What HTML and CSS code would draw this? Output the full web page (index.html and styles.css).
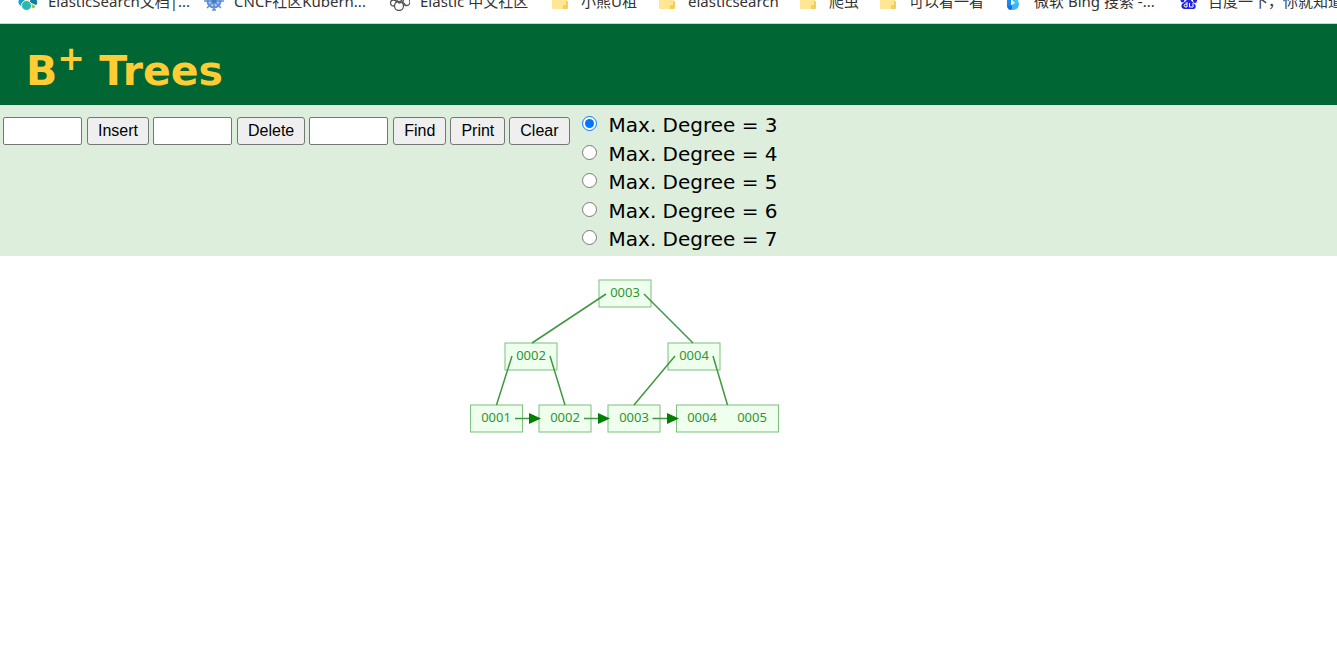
FILE: index.html
```html
<!DOCTYPE html>
<html lang="en">
<head>
<meta charset="utf-8">
<title>B+ Trees</title>
<link rel="stylesheet" href="styles.css">
</head>
<body>
<nav class="bookmarks" aria-label="Bookmarks">
  <a class="bookmark" href="#"><svg class="icon" viewBox="0 0 20 20"><circle cx="8" cy="5" r="5" fill="#fed10a"/><path d="M1 8a4 4 0 0 1 6 4l-2 3a4 4 0 0 1-4-6z" fill="#07a5de"/><path d="M11 11l4-5q5 2 4 7l-1 1z" fill="#0a7ea4"/><circle cx="8.500" cy="14.500" r="5" fill="#24bbb1" stroke="#fff"/><path d="M13.500 13l4 2q-1 3-3.500 2z" fill="#93c83e"/></svg><span>ElasticSearch文档|...</span></a>
  <a class="bookmark" href="#"><svg class="icon" viewBox="0 0 20 20" fill="none" stroke="#5c8fd6"><circle cx="10" cy="10" r="6.500" fill="#b5cdf0" stroke-width="2"/><path d="M10 1v18.500M0 10h20M3 3l14 14M17 3l-14 14M8 19h4" stroke-width="1.500"/><circle cx="10" cy="10" r="2.500" fill="#4779c4"/></svg><span>CNCF社区Kubern...</span></a>
  <a class="bookmark" href="#"><svg class="icon" viewBox="0 0 20 20" fill="#fff" stroke="#555" stroke-width="1.300"><circle cx="8" cy="6" r="5"/><circle cx="3.500" cy="12" r="3"/><circle cx="16.500" cy="11" r="3.500"/><circle cx="9" cy="15" r="4.500"/><path d="M6 8l3 4 4-1M14 12l2 3" fill="none"/></svg><span>Elastic 中文社区</span></a>
  <a class="bookmark" href="#"><svg class="icon" viewBox="0 0 20 20"><path d="M1 2h7l2 2h6v14H2q-1 0-1-1z" fill="#ffe694"/><path d="M12 14h3v-4h1q1 0 1 1v6q0 1-1 1h-4z" fill="#f5cf55"/></svg><span>小熊U租</span></a>
  <a class="bookmark" href="#"><svg class="icon" viewBox="0 0 20 20"><path d="M1 2h7l2 2h6v14H2q-1 0-1-1z" fill="#ffe694"/><path d="M12 14h3v-4h1q1 0 1 1v6q0 1-1 1h-4z" fill="#f5cf55"/></svg><span>elasticsearch</span></a>
  <a class="bookmark" href="#"><svg class="icon" viewBox="0 0 20 20"><path d="M1 2h7l2 2h6v14H2q-1 0-1-1z" fill="#ffe694"/><path d="M12 14h3v-4h1q1 0 1 1v6q0 1-1 1h-4z" fill="#f5cf55"/></svg><span>爬虫</span></a>
  <a class="bookmark" href="#"><svg class="icon" viewBox="0 0 20 20"><path d="M1 2h7l2 2h6v14H2q-1 0-1-1z" fill="#ffe694"/><path d="M12 14h3v-4h1q1 0 1 1v6q0 1-1 1h-4z" fill="#f5cf55"/></svg><span>可以看一看</span></a>
  <a class="bookmark" href="#"><svg class="icon" viewBox="0 0 20 20"><path d="M3 0l4 2v14l-1 2q-3-1-3-4z" fill="#168bf0"/><path d="M8 5l5 3q2 2 2 6l-4-2-3-3z" fill="#35c8f5"/><path d="M6 15l5-3q4 0 4 2-1 5-7 5-5 0-5-5z" fill="#40b4f5"/><path d="M3 13q2 3 5 1v4l-2 1q-3-1-3-6z" fill="#1670e2"/></svg><span>微软 Bing 搜索 -...</span></a>
  <a class="bookmark" href="#"><svg class="icon" viewBox="0 0 20 20"><g fill="#2323dc"><ellipse cx="4.500" cy="9" rx="2" ry="2.500"/><ellipse cx="8" cy="4.500" rx="2" ry="3"/><ellipse cx="13" cy="4.500" rx="2" ry="3"/><ellipse cx="17" cy="9.500" rx="2" ry="2.500"/><path d="M10.500 8q2 0 3 2l4 4q1 4-3 4H6q-4-1-2-5l4-3q1-2 2.500-2z"/></g><path d="M9 11v5H7q-2-1 0-3h2M11.500 12v4H15v-4" fill="none" stroke="#fff"/></svg><span>百度一下，你就知道</span></a>
</nav>
<header class="heading"><h1 class="title">B<sup class="plus">+</sup> Trees</h1></header>
<form class="controls">
  <div class="actions">
    <input class="field" type="text" aria-label="Value to insert">
    <button class="button" type="button">Insert</button>
    <input class="field" type="text" aria-label="Value to delete">
    <button class="button" type="button">Delete</button>
    <input class="field" type="text" aria-label="Value to find">
    <button class="button" type="button">Find</button>
    <button class="button" type="button">Print</button>
    <button class="button" type="button">Clear</button>
  </div>
  <div class="degrees" role="radiogroup" aria-label="Maximum degree">
    <label class="degree"><input class="radio" type="radio" name="degree" checked>Max. Degree = 3</label>
    <label class="degree"><input class="radio" type="radio" name="degree">Max. Degree = 4</label>
    <label class="degree"><input class="radio" type="radio" name="degree">Max. Degree = 5</label>
    <label class="degree"><input class="radio" type="radio" name="degree">Max. Degree = 6</label>
    <label class="degree"><input class="radio" type="radio" name="degree">Max. Degree = 7</label>
  </div>
</form>
<main class="canvas">
  <svg class="tree" width="310" height="156" viewBox="470 278 310 156" role="img" aria-label="B+ tree holding keys 1 to 5">
    <g class="node">
      <rect x="599" y="280" width="52" height="27"/>
      <rect x="505" y="343" width="52" height="27"/>
      <rect x="668" y="343" width="52" height="27"/>
      <rect x="470.500" y="405" width="52" height="27"/>
      <rect x="539" y="405" width="52" height="27"/>
      <rect x="608" y="405" width="52" height="27"/>
      <rect x="676.500" y="405" width="102" height="27"/>
    </g>
    <g class="edge" stroke-width="1.500">
      <path d="M606 294L532 343M644 294L693 343M512 356L496.500 405M550 356L565 405M675 356L634 405M713 356L727.500 405"/>
      <path d="M515 418.500H531M584 418.500H600M652.500 418.500H668"/>
    </g>
    <path class="arrow" d="M529 413l12 5.500-12 5.500zM598 413l12 5.500-12 5.500zM667 413l12 5.500-12 5.500z"/>
    <g class="key">
      <text x="625" y="297">0003</text>
      <text x="531" y="360">0002</text>
      <text x="694" y="360">0004</text>
      <text x="496" y="422">0001</text>
      <text x="565" y="422">0002</text>
      <text x="634" y="422">0003</text>
      <text x="702" y="422">0004</text>
      <text x="752" y="422">0005</text>
    </g>
  </svg>
</main>
</body>
</html>
```
FILE: styles.css
```css
body {
  margin: 0;
  background: #fff;
  color: #000;
  font-family: Verdana, "DejaVu Sans", sans-serif;
}

.bookmarks {
  box-sizing: border-box;
  display: grid;
  grid-template-columns: 186px 186px 161px 107px 141px 80px 125px 174px auto;
  grid-template-rows: 11px;
  align-items: end;
  height: 24px;
  padding: 0 0 12px 18px;
  border-bottom: 1px solid #ccd5d0;
  overflow: hidden;
}

.bookmark {
  display: flex;
  align-items: center;
  gap: 10px;
  color: #333;
  font: 15px/20px "Noto Sans", "Noto Sans CJK SC", sans-serif;
  text-decoration: none;
  white-space: nowrap;
}

.icon {
  flex: none;
  width: 20px;
  height: 20px;
}

.heading {
  padding: 23px 26px 10px;
  background: #063;
}

.title {
  margin: 0;
  color: #fc3;
  font-size: 41px;
  line-height: 48px;
}

.plus {
  font-size: 33px;
  line-height: 0;
}

.controls {
  display: flex;
  align-items: flex-start;
  gap: 12px;
  padding: 6px 3px 3px;
  background: #ded;
}

.actions {
  display: flex;
  gap: 4px;
  padding-top: 6px;
}

.field,
.button {
  box-sizing: border-box;
  height: 28px;
  margin: 0;
  border: 1px solid #767676;
  font: 16px "Liberation Sans", Arial, sans-serif;
}

.field {
  width: 79px;
  margin-right: 1px;
  border-radius: 2px;
  background: #fff;
}

.button {
  padding: 0 10px;
  border-radius: 3px;
  background: #efefef;
  color: #000;
}

.degrees {
  display: flex;
  flex-direction: column;
  justify-content: space-between;
  min-height: 142px;
}

.degree {
  display: flex;
  align-items: center;
  gap: 12px;
  font-size: 20px;
  line-height: 28px;
}

.radio {
  width: 15px;
  height: 15px;
  margin: 0 0 3px;
}

.canvas {
  display: flex;
  justify-content: center;
  padding: 22px 88px 22px 0;
}

.node {
  fill: #eeffee;
  stroke: #7fbf7f;
}

.edge {
  fill: none;
  stroke: #3f983f;
}

.arrow {
  fill: #007f00;
}

.key {
  fill: #309430;
  font: 13px "Noto Sans", sans-serif;
  text-anchor: middle;
}
```
